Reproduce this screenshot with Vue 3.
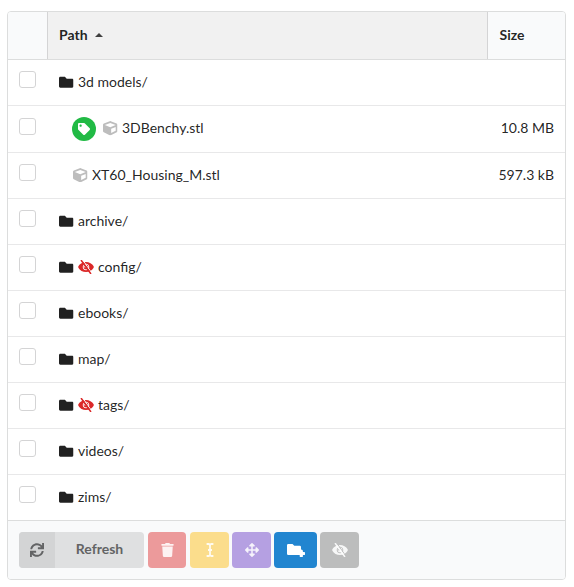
<script setup>
const rows = [
  { name: '3d models/', folder: true },
  { name: '3DBenchy.stl', size: '10.8 MB', tagged: true },
  { name: 'XT60_Housing_M.stl', size: '597.3 kB' },
  { name: 'archive/', folder: true },
  { name: 'config/', folder: true, hidden: true },
  { name: 'ebooks/', folder: true },
  { name: 'map/', folder: true },
  { name: 'tags/', folder: true, hidden: true },
  { name: 'videos/', folder: true },
  { name: 'zims/', folder: true },
]
</script>

<template>
  <svg class="defs" width="0" height="0">
    <symbol id="folder" viewBox="0 0 512 512"><path d="M464 128H272l-64-64H48C21.49 64 0 85.49 0 112v288c0 26.51 21.49 48 48 48h416c26.51 0 48-21.49 48-48V176c0-26.51-21.49-48-48-48z" /></symbol>
    <symbol id="cube" viewBox="0 0 512 512"><path d="M239.1 6.3l-208 78c-18.7 7-31.1 25-31.1 45v225.1c0 18.2 10.3 34.8 26.5 42.9l208 104c13.5 6.8 29.4 6.8 42.9 0l208-104c16.3-8.1 26.5-24.8 26.5-42.9V129.3c0-20-12.4-37.9-31.1-44.9l-208-78C262 2.2 250 2.2 239.1 6.3zM256 68.4l192 72v1.1l-192 78-192-78v-1.1l192-72zm32 356V275.5l160-65v133.9l-160 80z" /></symbol>
    <symbol id="tag" viewBox="0 0 512 512"><path d="M0 252.118V48C0 21.49 21.49 0 48 0h204.118a48 48 0 0 1 33.941 14.059l211.882 211.882c18.745 18.745 18.745 49.137 0 67.882L293.823 497.941c-18.745 18.745-49.137 18.745-67.882 0L14.059 286.059A48 48 0 0 1 0 252.118zM112 64c-26.51 0-48 21.49-48 48s21.49 48 48 48 48-21.49 48-48-21.49-48-48-48z" /></symbol>
    <symbol id="eye" viewBox="0 0 576 512">
      <mask id="cut" maskUnits="userSpaceOnUse" x="0" y="0" width="576" height="512">
        <rect width="576" height="512" fill="#fff" />
        <path d="M150-26L490 460" stroke="#000" stroke-width="36" />
      </mask>
      <g mask="url(#cut)">
        <path fill-rule="evenodd" d="M569.4 231.6C512.8 135.9 407.8 72 288 72S63.200 135.900 6.600 231.600a47.900 47.900 0 0 0 0 48.800C63.200 376.100 168.200 440 288 440s224.800-63.900 281.400-159.600a47.900 47.900 0 0 0 0-48.800zM288 376c-66.300 0-120-53.700-120-120s53.700-120 120-120 120 53.700 120 120-53.700 120-120 120zM288 168a88 88 0 1 0 0 176 88 88 0 0 0 0-176zm-34 36a38 38 0 1 1 0 76 38 38 0 0 1 0-76z" />
      </g>
      <path d="M118 20L458 492" fill="none" stroke="currentColor" stroke-width="54" stroke-linecap="round" />
    </symbol>
  </svg>

  <div class="table">
    <div class="row head">
      <div class="select"></div>
      <div class="path">Path<i class="caret"></i></div>
      <div class="size">Size</div>
    </div>
    <div v-for="row in rows" :key="row.name" class="row" :class="{ tagged: row.tagged }">
      <div class="select"><span class="checkbox"></span></div>
      <div class="path" :class="{ file: !row.folder }">
        <span v-if="row.tagged" class="badge"><svg><use href="#tag" /></svg></span>
        <svg v-if="row.folder" class="icon"><use href="#folder" /></svg>
        <svg v-else class="icon cube"><use href="#cube" /></svg>
        <svg v-if="row.hidden" class="icon eye"><use href="#eye" /></svg>
        <span>{{ row.name }}</span>
      </div>
      <div class="size">{{ row.size }}</div>
    </div>
    <div class="foot">
      <button class="refresh">
        <span class="sync"><svg width="14" height="14" viewBox="0 0 512 512"><path d="M440.935 12.574l3.966 82.766C399.416 41.904 331.674 8 256 8 134.813 8 33.933 94.924 12.296 209.824 10.908 217.193 16.604 224 24.103 224h49.084c5.57 0 10.377-3.842 11.676-9.259C103.407 137.408 172.931 80 256 80c60.893 0 114.512 30.856 146.104 77.801l-101.53-4.865c-6.845-.328-12.574 5.133-12.574 11.986v47.411c0 6.627 5.373 12 12 12h200.333c6.627 0 12-5.373 12-12V12c0-6.627-5.373-12-12-12h-47.411c-6.853 0-12.315 5.729-11.987 12.574zM256 432c-60.895 0-114.517-30.858-146.109-77.805l101.868 4.871c6.845.327 12.573-5.134 12.573-11.986v-47.412c0-6.627-5.373-12-12-12H12c-6.627 0-12 5.373-12 12V500c0 6.627 5.373 12 12 12h47.385c6.863 0 12.328-5.745 11.985-12.599l-4.129-82.575C112.725 470.166 180.405 504 256 504c121.187 0 222.067-86.924 243.704-201.824 1.388-7.369-4.308-14.176-11.807-14.176h-49.084c-5.57 0-10.377 3.842-11.676 9.259C408.593 374.592 339.069 432 256 432z" /></svg></span>
        <span class="label">Refresh</span>
      </button>
      <button class="btn red"><svg width="13" height="14" viewBox="0 0 448 512"><path d="M432 32H312l-9.400-18.700A24 24 0 0 0 281.100 0H166.800a23.720 23.720 0 0 0-21.400 13.300L136 32H16A16 16 0 0 0 0 48v32a16 16 0 0 0 16 16h416a16 16 0 0 0 16-16V48a16 16 0 0 0-16-16zM53.200 467a48 48 0 0 0 47.900 45h245.800a48 48 0 0 0 47.900-45L416 128H32z" /></svg></button>
      <button class="btn yellow"><svg width="8" height="14" viewBox="0 0 8 14"><path d="M.6 1H2.500Q4 1 4 2.500Q4 1 5.500 1H7.400M4 2.500V11.500M2 7H6M.6 13H2.500Q4 13 4 11.500Q4 13 5.500 13H7.400" fill="none" stroke="currentColor" stroke-width="1.800" /></svg></button>
      <button class="btn violet"><svg width="14" height="14" viewBox="0 0 512 512"><path d="M352.201 425.775l-79.196 79.196c-9.373 9.373-24.568 9.373-33.941 0l-79.196-79.196c-15.119-15.119-4.411-40.971 16.971-40.970h51.162L228 284H127.196v51.162c0 21.382-25.851 32.090-40.971 16.971L7.029 272.937c-9.373-9.373-9.373-24.569 0-33.941L86.225 159.800c15.119-15.119 40.971-4.411 40.971 16.971V228H228V127.196h-51.230c-21.382 0-32.090-25.851-16.971-40.971l79.196-79.196c9.373-9.373 24.568-9.373 33.941 0l79.196 79.196c15.119 15.119 4.411 40.971-16.971 40.971h-51.162V228h100.804v-51.162c0-21.382 25.851-32.090 40.970-16.971l79.196 79.196c9.373 9.373 9.373 24.569 0 33.941L425.773 352.200c-15.119 15.119-40.971 4.411-40.970-16.971V284H284v100.804h51.230c21.382 0 32.090 25.851 16.971 40.971z" /></svg></button>
      <button class="btn blue"><svg width="18" height="14" viewBox="0 0 18 14"><path d="M1.300 1H5.500L7.300 2.700H12.700Q14 2.700 14 4V12H1.300Q0 12 0 10.700V2.300Q0 1 1.300 1z" /><path d="M14.300 8V13M11.800 10.500H16.800" fill="none" stroke="currentColor" stroke-width="3.200" stroke-linecap="round" /></svg></button>
      <button class="btn grey"><svg width="16" height="14"><use href="#eye" /></svg></button>
    </div>
  </div>
</template>

<style>
body { background: #fff; }
</style>

<style scoped>
.defs { position: absolute; }
.table {
  box-sizing: border-box;
  width: 559px;
  height: 569px;
  margin: 11px 0 0 7px;
  border: 1px solid #dcdddd;
  border-radius: 4px;
  overflow: hidden;
  font: 14px/20px Lato, sans-serif;
  color: rgba(0, 0, 0, 0.87);
}
svg { display: block; flex: none; fill: currentColor; }
.row {
  display: grid;
  grid-template-columns: 39px 440px 78px;
  box-sizing: border-box;
  height: 46px;
  border-bottom: 1px solid #e8e8e9;
}
.row.tagged { height: 47px; }
.row:nth-child(11) { border-color: #dcdddd; }
.head {
  height: 48px;
  border-color: #dcdddd;
  background: #f9fafb;
  font-weight: 700;
}
.select { padding: 11px 0 0 11px; }
.tagged .select { padding-top: 12px; }
.checkbox {
  display: block;
  box-sizing: border-box;
  width: 17px;
  height: 17px;
  border: 1px solid #d4d4d5;
  border-radius: 3px;
  background: #fff;
}
.path { display: flex; align-items: center; padding: 0 0 2px 12px; }
.path.file { padding-left: 26px; }
.tagged .path.file { padding-left: 27px; }
.head .path { border-left: 1px solid #d4d4d5; padding: 0 0 1px 11px; background: #f1f1f1; }
.head .size { border-left: 1px solid #d4d4d5; padding: 0 0 1px 11.5px; justify-content: flex-start; }
.size { display: flex; align-items: center; justify-content: flex-end; padding: 0 11px 2px 0; }
.caret {
  margin: 0 0 1px 7px;
  border: 4.5px solid transparent;
  border-top: 0;
  border-bottom-color: #404040;
}
.icon { width: 14.500px; height: 14.500px; margin: 1px 4.500px 0 0; }
.cube { color: #bdbdbd; margin-right: 4.5px; }
.eye { width: 16px; height: 14px; color: #db2828; margin-right: 4px; }
.badge {
  display: flex;
  align-items: center;
  justify-content: center;
  width: 24px;
  height: 24px;
  margin: 2px 7px 0 -2px;
  border-radius: 50%;
  background: #21ba45;
  color: #fff;
}
.badge svg { width: 12px; height: 12px; }
.foot { display: flex; height: 58px; box-sizing: border-box; padding: 11px; background: #f9fafb; }
button {
  display: flex;
  align-items: center;
  justify-content: center;
  height: 36px;
  padding: 0;
  border: 0;
  border-radius: 4px;
  font: 700 14px/14px Lato, sans-serif;
}
.refresh { width: 125px; margin-right: 4px; overflow: hidden; background: #dfe0e1; color: #636465; }
.sync { display: flex; align-items: center; justify-content: center; width: 36px; height: 36px; background: #d3d4d5; }
.label { flex: 1; padding-bottom: 2px; text-align: center; }
.btn { width: 39px; margin-right: 3px; color: rgba(255, 255, 255, 0.87); }
.red { width: 38px; margin-right: 4px; background: #ec9a9b; }
.yellow { background: #fbdd8c; }
.violet { background: #b5a0e2; }
.blue { width: 43px; background: #2185d0; color: #fff; }
.grey { margin-right: 0; background: #bcbdbd; }
</style>
